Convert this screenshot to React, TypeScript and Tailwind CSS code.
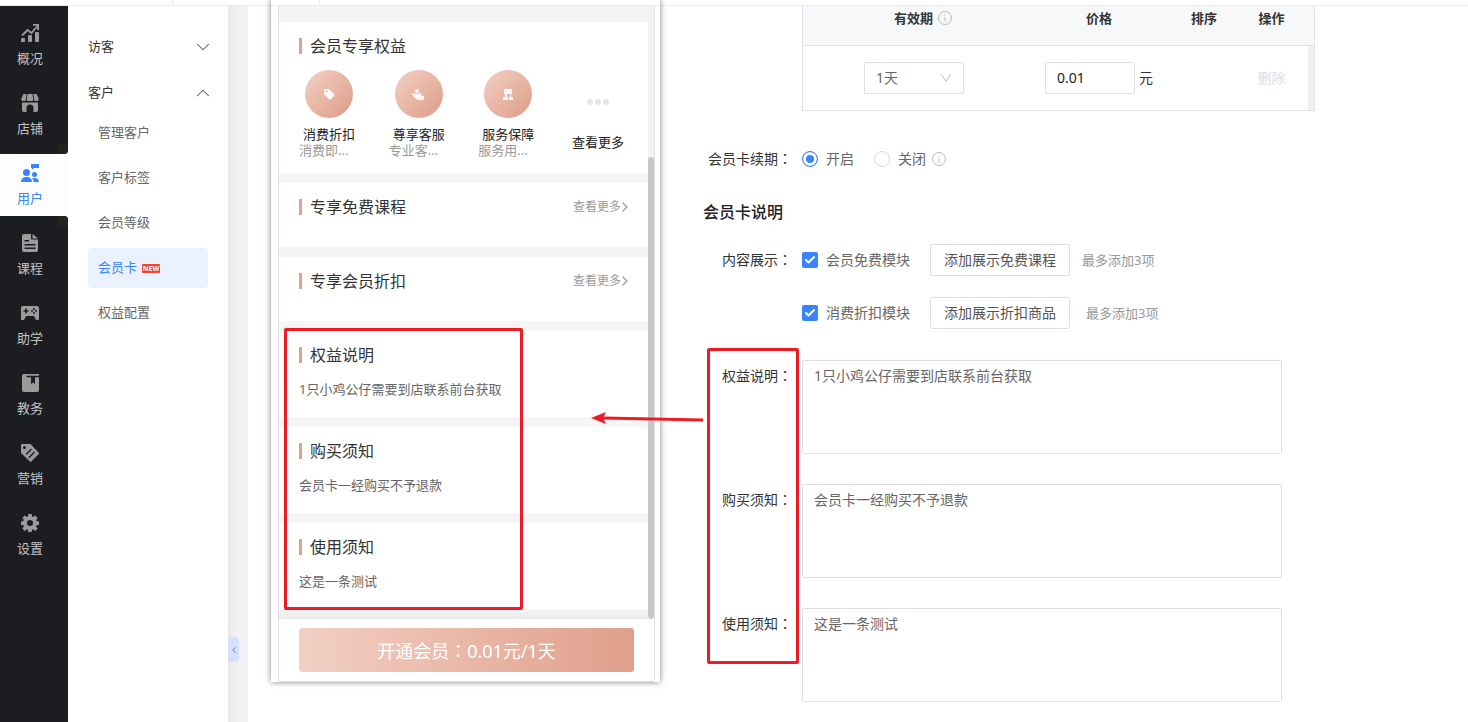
import type { ReactNode } from 'react'
import { Check, ChevronDown, ChevronLeft, ChevronRight, ChevronUp } from 'lucide-react'

const fontStack = "font-['Noto_Sans','Noto_Sans_CJK_SC',sans-serif]"

/* Sidebar icons, all on an 18x18 grid */
const icons: Record<string, ReactNode> = {
    overview: (
        <>
            <rect x="0" y="14" width="4" height="4" rx="1" />
            <rect x="7" y="11" width="4" height="7" rx="1" />
            <rect x="14" y="8" width="4" height="10" rx="1" />
            <path d="M1 11.5 6.5 6l4 3L16 2.5" fill="none" stroke="currentColor" strokeWidth="1.8" />
            <path d="M12 0h6v6h-1.8V1.8H12z" />
        </>
    ),
    shop: (
        <>
            <path d="M2.5 0h3L4.6 7H2a2 2 0 0 1-1.8-2.2zM6.500 0h5l.9 5.500a1.700 1.700 0 0 1-1.700 1.500H7.300a1.700 1.700 0 0 1-1.700-1.500zM12.500 0h3l2.300 4.800A2 2 0 0 1 16 7h-2.600z" />
            <path d="M1 8.500h16V16a2 2 0 0 1-2 2h-2.500v-4a3.500 3.500 0 0 0-7 0v4H3a2 2 0 0 1-2-2z" />
        </>
    ),
    users: (
        <>
            <circle cx="5.5" cy="8.5" r="3.5" />
            <path d="M0 18c0-3 2-5 5.500-5s5.500 2 5.500 5z" />
            <circle cx="13.5" cy="10.5" r="2.5" />
            <path d="M12.500 18c0-1.500-.5-2.800-1.300-3.800 3.800-1 6.800.6 6.800 3.800z" />
            <path d="M10 0h8v4h-5l-2 1.500V4h-1z" />
        </>
    ),
    course: (
        <path
            fillRule="evenodd"
            d="M3 0h7v5.500h7V16a2 2 0 0 1-2 2H3a2 2 0 0 1-2-2V2a2 2 0 0 1 2-2zm8.500 0L17 4.500h-5.500zM3.500 6v1.500H8V6zm0 4v1.500h11V10zm0 3.500V15h11v-1.500z"
        />
    ),
    study: (
        <path
            fillRule="evenodd"
            d="M2 2h14a2 2 0 0 1 2 2v11a1 1 0 0 1-1 1h-2l-2-4H5l-2 4H1a1 1 0 0 1-1-1V4a2 2 0 0 1 2-2zm2.200 2.500v1.700H2.500v1.600h1.700v1.700h1.600V7.800h1.700V6.200H5.800V4.500zM13 3.800l-1.200 1.200L13 6.200 14.200 5zM11 5.800 9.800 7 11 8.200 12.200 7zm4 0L13.800 7 15 8.200 16.200 7zm-2 2L11.800 9l1.200 1.200L14.200 9z"
        />
    ),
    teaching: (
        <path fillRule="evenodd" d="M3 0h15v1.800H5.500v1.400H10V10l2-1.500L14 10V3.200h4V16a2 2 0 0 1-2 2H3a2 2 0 0 1-2-2V2a2 2 0 0 1 2-2z" />
    ),
    marketing: (
        <path
            fillRule="evenodd"
            d="M1 0h8.500l8.200 8.700a1 1 0 0 1 0 1.400l-7.400 7.500a1 1 0 0 1-1.400 0L0 9V1a1 1 0 0 1 1-1zm2.500 2a1.500 1.500 0 1 0 0 3 1.500 1.500 0 0 0 0-3zM10 4.500l-5.200 5.200 1 1L11 5.500zm3 3-5.700 5.700 1 1L14 8.500z"
        />
    ),
    settings: (
        <path
            fillRule="evenodd"
            d="M7.300 0h3.400l.4 2.600 1.100.5 2.100-1.600 2.400 2.400-1.600 2.100.5 1.100 2.400.4v3.400l-2.400.4-.5 1.100 1.600 2.100-2.400 2.400-2.100-1.600-1.100.5-.4 2.200H7.300l-.4-2.200-1.100-.5-2.100 1.600-2.400-2.400 1.600-2.100-.5-1.100L0 10.900V7.500l2.400-.4.5-1.100-1.600-2.100 2.400-2.400 2.100 1.600 1.100-.5zM9 6a3 3 0 1 0 0 6 3 3 0 0 0 0-6z"
        />
    ),
}

function NavItem({ icon, label, active }: { icon: string; label: string; active?: boolean }) {
    return (
        <a
            href="#"
            className={`flex flex-col items-center gap-[7px] pt-[10px] pb-[9px] pr-2 text-[13px] leading-[18px] ${active ? 'bg-[#fdfdfd] text-[#3a84ff]' : 'text-[#c4c4c5]'}`}
        >
            <svg viewBox="0 0 18 18" fill="currentColor" className={`size-[18px] ${active ? '' : 'text-[#9b9b9c]'}`}>
                {icons[icon]}
            </svg>
            <span>{label}</span>
        </a>
    )
}

function Sidebar() {
    return (
        <nav className="w-[68px] shrink-0 flex flex-col bg-[#fdfdfd]">
            <div className="relative flex flex-col gap-2 py-2 bg-[#1c1d21] rounded-br overflow-hidden">
                <span className="absolute right-0 bottom-0 size-[10px] bg-[#25231f]"></span>
                <NavItem icon="overview" label="概况" />
                <NavItem icon="shop" label="店铺" />
            </div>
            <NavItem icon="users" label="用户" active />
            <div className="relative flex-1 flex flex-col gap-2 py-2 bg-[#1c1d21] rounded-tr overflow-hidden">
                <span className="absolute right-0 top-0 size-[10px] bg-[#25231f]"></span>
                <NavItem icon="course" label="课程" />
                <NavItem icon="study" label="助学" />
                <NavItem icon="teaching" label="教务" />
                <NavItem icon="marketing" label="营销" />
                <NavItem icon="settings" label="设置" />
            </div>
        </nav>
    )
}

const subItems = ['管理客户', '客户标签', '会员等级', '会员卡', '权益配置']

function SubMenu() {
    return (
        <aside className="w-40 shrink-0 px-5 pt-[21px] text-[13px] bg-white">
            <button type="button" className="w-full h-10 mb-[6px] flex items-center justify-between text-[#333]">
                访客
                <ChevronDown className="size-[22px] -mr-[6px] text-[#555]" strokeWidth={1.1} />
            </button>
            <button type="button" className="w-full h-10 flex items-center justify-between text-[#333]">
                客户
                <ChevronUp className="size-[22px] -mr-[6px] text-[#555]" strokeWidth={1.1} />
            </button>
            <ul className="space-y-[5px]">
                {subItems.map(item => (
                    <li key={item}>
                        <a
                            href="#"
                            className={`h-10 px-[10px] flex items-center gap-[5px] rounded ${item === '会员卡' ? 'bg-[#ebf2ff] text-[#3a84ff]' : 'text-[#666]'}`}
                        >
                            {item}
                            {item === '会员卡' && (
                                <span className="w-[18px] h-[9px] flex items-center justify-center rounded-[1px] bg-[#f5432d] text-white text-[7px] leading-none font-bold">
                                    NEW
                                </span>
                            )}
                        </a>
                    </li>
                ))}
            </ul>
        </aside>
    )
}

function SectionTitle({ title, more }: { title: string; more?: boolean }) {
    return (
        <div className="h-4 flex items-center justify-between">
            <h3 className="pl-2 border-l-[3px] border-[#e0a18d] text-base leading-4 text-[#333]">{title}</h3>
            {more && (
                <a href="#" className="flex items-center text-xs text-[#999]">
                    查看更多
                    <ChevronRight className="size-4 -ml-1 -mr-[5px]" strokeWidth={1.8} />
                </a>
            )}
        </div>
    )
}

const perks = [
    {
        name: '消费折扣',
        desc: '消费即...',
        icon: <path fillRule="evenodd" d="M1 1h5l6 6-5 5-6-6zm2.500 1.500a1 1 0 1 0 0 2 1 1 0 0 0 0-2z" />,
    },
    {
        name: '尊享客服',
        desc: '专业客...',
        icon: (
            <>
                <circle cx="5" cy="3" r="2" />
                <path d="M0 5.500h10L9 7.500l3 .5v4H6L2 9.500z" />
            </>
        ),
    },
    {
        name: '服务保障',
        desc: '服务用...',
        icon: <path d="M2 1h8v5H2zM3 6h2v3h1v3H1V9h2zM8 6h1v3h2v3H7V9h1z" />,
    },
]

function Perks() {
    return (
        <div className="mt-4 flex justify-between text-[13px] leading-4">
            {perks.map(p => (
                <div key={p.name} className="w-[60px]">
                    <div className="size-12 mx-auto mb-2 flex items-center justify-center rounded-full bg-linear-to-br from-[#f2d0c4] to-[#dd9c87] text-white">
                        <svg viewBox="0 0 13 13" fill="currentColor" className="size-[13px] opacity-90">{p.icon}</svg>
                    </div>
                    <p className="text-center text-[#222]">{p.name}</p>
                    <p className="text-[#999]">{p.desc}</p>
                </div>
            ))}
            <button type="button" className="w-[60px] flex flex-col items-center pt-[29px] text-[#222]">
                <span className="flex gap-[2px]">
                    <i className="size-[6px] rounded-full bg-[#e6e6e6]"></i>
                    <i className="size-[6px] rounded-full bg-[#e6e6e6]"></i>
                    <i className="size-[6px] rounded-full bg-[#e6e6e6]"></i>
                </span>
                <span className="mt-[29px]">查看更多</span>
            </button>
        </div>
    )
}

const notes = [
    { id: 'rights', title: '权益说明', text: '1只小鸡公仔需要到店联系前台获取' },
    { id: 'buy', title: '购买须知', text: '会员卡一经购买不予退款' },
    { id: 'usage', title: '使用须知', text: '这是一条测试' },
]

function PhonePreview() {
    return (
        <section className="relative w-[389px] shrink-0 self-start -mt-[6px] ml-[23px] bg-white shadow-[0_0_6px_rgba(0,0,0,0.5)]">
            <div className="h-[6px] pl-12 border-b border-[#ececec]">
                <div className="h-full w-px bg-[#ececec]"></div>
            </div>
            <div className="ml-[7px] mr-[5px] border border-t-0 border-[#dfe0e8] rounded-b">
                <div className="flex bg-[#f5f5f5]">
                    <div className="flex-1 pt-4 space-y-[10px] *:bg-white *:px-5 *:pt-4">
                        <div className="pb-[15px]">
                            <SectionTitle title="会员专享权益" />
                            <Perks />
                        </div>
                        <div className="pb-8">
                            <SectionTitle title="专享免费课程" more />
                        </div>
                        <div className="pb-8">
                            <SectionTitle title="专享会员折扣" more />
                        </div>
                        {notes.map(n => (
                            <div key={n.id} className="pb-[19px]">
                                <SectionTitle title={n.title} />
                                <p className="mt-[17px] text-[13px] leading-[18px] text-[#666]">{n.text}</p>
                            </div>
                        ))}
                    </div>
                    {/* Scrollbar */}
                    <div className="w-[6px] pt-[151px] flex flex-col bg-[#f1f1f1]">
                        <div className="flex-1 rounded-full bg-[#c8c8c8] -mb-[10px]"></div>
                    </div>
                </div>
                <div className="h-[10px] mr-[6px] bg-linear-to-b from-[#f5f5f5] to-[#ebebeb]"></div>
                <div className="px-5 py-[9px]">
                    <button
                        type="button"
                        className="w-full h-11 rounded-[3px] bg-linear-to-r from-[#f2d0c4] to-[#df9f8b] text-white text-lg"
                    >
                        开通会员<Colon />0.01元/1天
                    </button>
                </div>
            </div>
            {/* Highlight around the three notes */}
            <div className="absolute left-[13px] top-[328px] w-[239px] h-[282px] border-3 border-[#ed1c24] rounded-[2px]"></div>
        </section>
    )
}

function Colon() {
    return <span className="font-['Noto_Sans_CJK_TC',sans-serif]">：</span>
}

function InfoIcon() {
    return (
        <svg viewBox="0 0 14 14" fill="none" stroke="#bbb" className="size-[14px]">
            <circle cx="7" cy="7" r="6.5" />
            <path d="M7 3.500v1.200M7 6v4.500" />
        </svg>
    )
}

function PriceTable() {
    return (
        <div className="w-[513px] border border-t-0 border-[#dfe0e8] text-[#333]">
            <table className="w-full table-fixed border-collapse">
                <colgroup>
                    <col className="w-[222px]" />
                    <col className="w-[148px]" />
                    <col className="w-[62px]" />
                    <col />
                    <col className="w-[6px]" />
                </colgroup>
                <thead className="bg-[#f7f8fa]">
                    <tr className="h-[39px] border-b border-[#dfe0e8] align-top text-[13px] leading-6 *:font-bold">
                        <th className="pl-[18px]">
                            <span className="flex items-center justify-center gap-[5px]">有效期 <InfoIcon /></span>
                        </th>
                        <th>价格</th>
                        <th>排序</th>
                        <th>操作</th>
                        <th></th>
                    </tr>
                </thead>
                <tbody>
                    <tr className="h-[65px] text-sm">
                        <td>
                            <div className="relative w-[100px] mx-auto">
                                <select
                                    aria-label="有效期"
                                    className="w-full h-8 pl-[11px] appearance-none border border-[#dcdfe6] rounded-[2px] bg-white text-[#666]"
                                >
                                    <option>1天</option>
                                </select>
                                <svg
                                    viewBox="0 0 10 8"
                                    fill="none"
                                    stroke="#bbb"
                                    className="absolute right-[13px] top-3 w-[10px] h-2 pointer-events-none"
                                >
                                    <path d="M.5.5 5 7.200 9.500.5" />
                                </svg>
                            </div>
                        </td>
                        <td>
                            <label className="flex items-center justify-center gap-1">
                                <input
                                    type="text"
                                    defaultValue="0.01"
                                    className="w-[90px] h-8 px-[11px] border border-[#dcdfe6] rounded-[2px] text-[#222]"
                                />
                                元
                            </label>
                        </td>
                        <td></td>
                        <td className="text-center">
                            <button type="button" disabled className="text-[#dcdee5]">删除</button>
                        </td>
                        <td className="bg-[#f1f1f1]"></td>
                    </tr>
                </tbody>
            </table>
        </div>
    )
}

function FieldLabel({ text, htmlFor }: { text: string; htmlFor?: string }) {
    return (
        <label htmlFor={htmlFor} className="w-[89px] shrink-0 text-right leading-[30px] whitespace-nowrap text-[#333]">
            {text}<Colon />
        </label>
    )
}

const radioClass =
    'size-4 appearance-none rounded-full border border-[#d5d7de] checked:border-[#3a84ff] checked:bg-[#3a84ff] checked:shadow-[inset_0_0_0_3px_white]'

function ModuleRow({ label, action, hintClass }: { label: string; action: string; hintClass: string }) {
    return (
        <div className="h-8 flex items-center">
            <label className="flex items-center gap-2">
                <span className="grid size-4 place-items-center *:col-start-1 *:row-start-1">
                    <input type="checkbox" defaultChecked className="size-4 appearance-none rounded-[2px] bg-[#3a84ff]" />
                    <Check className="size-3 text-white pointer-events-none" strokeWidth={4} />
                </span>
                {label}
            </label>
            <button type="button" className="ml-5 w-[140px] h-8 border border-[#dcdfe6] rounded-[2px] text-[#555]">
                {action}
            </button>
            <span className={`text-[13px] text-[#999] ${hintClass}`}>最多添加3项</span>
        </div>
    )
}

function CardForm() {
    return (
        <form className="flex-1 min-w-0 ml-[43px] pb-5 text-sm text-[#666]">
            <div className="pl-[99px]">
                <PriceTable />
            </div>

            <div className="mt-8 flex gap-[10px]">
                <FieldLabel text="会员卡续期" />
                <div className="flex items-center gap-5">
                    <label className="flex items-center gap-2">
                        <input type="radio" name="renew" defaultChecked className={radioClass} />
                        开启
                    </label>
                    <label className="flex items-center gap-2">
                        <input type="radio" name="renew" className={radioClass} />
                        <span className="flex items-center gap-[6px]">
                            关闭
                            <InfoIcon />
                        </span>
                    </label>
                </div>
            </div>

            <h2 className="mt-[26px] text-base font-medium text-[#222]">会员卡说明</h2>

            <div className="mt-5 flex gap-[10px]">
                <FieldLabel text="内容展示" />
                <div className="space-y-[21px]">
                    <ModuleRow label="会员免费模块" action="添加展示免费课程" hintClass="ml-3" />
                    <ModuleRow label="消费折扣模块" action="添加展示折扣商品" hintClass="ml-4" />
                </div>
            </div>

            <div className="relative mt-[31px] space-y-[30px]">
                {notes.map(n => (
                    <div key={n.id} className="flex gap-[10px]">
                        <FieldLabel text={n.title} htmlFor={n.id} />
                        <textarea
                            id={n.id}
                            defaultValue={n.text}
                            className="w-full max-w-[480px] h-[94px] px-[11px] py-1 resize-none border border-[#dcdfe6] rounded-[2px] leading-[22px]"
                        />
                    </div>
                ))}
                {/* Highlight around the labels, with an arrow to the preview */}
                <div className="absolute left-1 -top-3 w-[92px] h-[316px] border-3 border-[#ed1c24] rounded-[2px] pointer-events-none"></div>
                <svg viewBox="0 0 114 14" className="absolute -left-28 top-[51px] w-[114px] h-[14px] pointer-events-none">
                    <path d="M12 7 112 9" stroke="#ed1c24" strokeWidth="3" />
                    <path d="M0 7 15 1l-3 6 3 6z" fill="#ed1c24" />
                </svg>
            </div>
        </form>
    )
}

export default function App() {
    return (
        <div className={`min-h-screen flex flex-col bg-white overflow-hidden ${fontStack}`}>
            <header className="h-[6px] pl-[172px] border-b border-[#ececec]">
                <div className="h-full w-px bg-[#ececec]"></div>
            </header>
            <div className="flex-1 flex">
                <Sidebar />
                <SubMenu />
                <div className="relative w-5 shrink-0 bg-linear-to-r from-[#e9e9eb] to-[#f2f2f4] to-50%">
                    <button
                        type="button"
                        aria-label="收起菜单"
                        className="absolute left-0 top-[631px] w-[11px] h-[25px] flex items-center justify-center rounded-r bg-[#d5e0fa] text-[#3a6cff]"
                    >
                        <ChevronLeft className="size-[10px]" strokeWidth={2} />
                    </button>
                </div>
                <main className="flex-1 min-w-0 flex">
                    <PhonePreview />
                    <CardForm />
                </main>
            </div>
        </div>
    )
}
